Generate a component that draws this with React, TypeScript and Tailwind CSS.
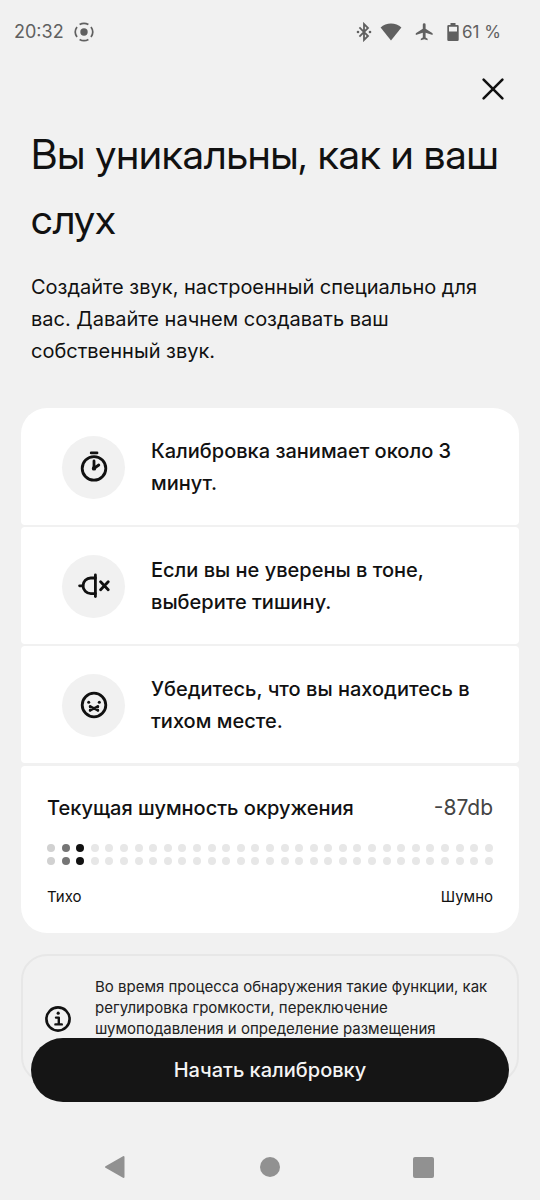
import type { ReactNode } from "react";

function TimerIcon() {
  return (
    <svg width="32" height="32" viewBox="0 0 32 32" fill="none" stroke="#111" strokeWidth="2.8" strokeLinecap="round" strokeLinejoin="round" aria-hidden="true">
      <circle cx="16" cy="17.4" r="11.8" />
      <path d="M13.2 1.900h5.800" />
      <path d="M16 10v7.400l4.800-3.400" />
      <circle cx="16" cy="17.4" r="1.4" fill="#111" strokeWidth="1.6" />
    </svg>
  );
}

function MutedToneIcon() {
  return (
    <svg width="32" height="32" viewBox="0 0 32 32" fill="none" stroke="#111" strokeWidth="2.8" strokeLinecap="round" aria-hidden="true">
      <path d="M17.4 5v21.6" />
      <path d="M17.4 8h-4.6a7.8 7.8 0 0 0 0 15.6h4.6" />
      <path d="M1.6 15.8H5" />
      <path d="M22.6 11.800l7.600 8M30.200 11.800l-7.600 8" />
    </svg>
  );
}

function QuietFaceIcon() {
  return (
    <svg width="32" height="32" viewBox="0 0 32 32" fill="none" stroke="#111" strokeWidth="2.8" strokeLinecap="round" aria-hidden="true">
      <circle cx="16" cy="16" r="11.8" />
      <circle cx="10.7" cy="13.2" r="1.5" fill="#111" stroke="none" />
      <circle cx="21.3" cy="13.2" r="1.5" fill="#111" stroke="none" />
      <path d="M12 17.4l8 4M20 17.4l-8 4" strokeWidth="2.4" />
      <path d="M12.2 17.6v.4M19.8 17.6v.4M12.2 21v.3M19.8 21v.3" strokeWidth="2.6" />
    </svg>
  );
}

function InfoIcon() {
  return (
    <svg className="shrink-0" width="28" height="28" viewBox="0 0 28 28" fill="none" stroke="#111" strokeWidth="2.6" strokeLinecap="round" aria-hidden="true">
      <circle cx="14" cy="14" r="11.6" />
      <path d="M12 12.6h2.8v6.6M11.4 19.4h6.400" strokeWidth="2.4" strokeLinejoin="round" />
      <circle cx="14.2" cy="8.2" r="1.6" fill="#111" stroke="none" />
    </svg>
  );
}

function StatusBar() {
  return (
    <div className="flex h-16 items-center justify-between pl-3.5 pr-[39px] text-[#606060]">
      <div className="flex items-center gap-2.5">
        <span className="text-lg leading-6">20:32</span>
        <svg width="20" height="20" viewBox="0 0 20 20" fill="none" stroke="currentColor" strokeWidth="1.7" aria-hidden="true">
          <circle cx="10" cy="10" r="3.7" fill="currentColor" stroke="none" />
          <path d="M5.6 2.6a8.6 8.6 0 0 1 8.8 0M5.6 17.4a8.6 8.6 0 0 0 8.8 0M3 5a8.6 8.6 0 0 0 0 10M17 5a8.6 8.6 0 0 1 0 10" />
        </svg>
      </div>
      <div className="flex items-center">
        <svg width="16" height="20" viewBox="0 0 16 20" fill="none" stroke="currentColor" strokeWidth="1.8" aria-hidden="true">
          <path d="M3.4 5.400l8.600 8.600-4 4V2l4 4-8.600 8.600" />
          <circle cx="2" cy="10" r="1.3" fill="currentColor" stroke="none" />
          <circle cx="14" cy="10" r="1.3" fill="currentColor" stroke="none" />
        </svg>
        <svg className="ml-2" width="22" height="20" viewBox="0 0 22 20" fill="currentColor" aria-hidden="true">
          <path d="M11 18.600L.6 5.600C3.400 3 7 1.600 11 1.600s7.600 1.400 10.400 4z" />
        </svg>
        <svg className="ml-3" width="20" height="20" viewBox="0 0 20 20" fill="currentColor" aria-hidden="true">
          <path d="M18.600 13v-1.800l-7-4.400V2.600a1.400 1.400 0 0 0-2.800 0v4.200l-7 4.400V13l7-2.200v4.600l-2 1.400v1.400l3.400-.9 3.400.9v-1.400l-2-1.400v-4.600z" />
        </svg>
        <svg className="ml-3" width="14" height="20" viewBox="0 0 14 20" aria-hidden="true">
          <path d="M4.500 1h5v2h2a1.200 1.200 0 0 1 1.200 1.200v13.600a1.200 1.200 0 0 1-1.200 1.200h-9a1.200 1.200 0 0 1-1.200-1.200V4.200A1.200 1.200 0 0 1 2.500 3h2zM3 4.800v4.800h8V4.800z" fill="currentColor" fillRule="evenodd" />
        </svg>
        <span className="ml-0.5 text-[17px] leading-6">61 %</span>
      </div>
    </div>
  );
}

function Tip({ icon, first, children }: { icon: ReactNode; first?: boolean; children: ReactNode }) {
  return (
    <li className={`flex items-center gap-[26px] bg-white pb-[26px] pt-[27px] pl-[41px] pr-6 ${first ? "rounded-t-[26px] rounded-b" : "rounded"}`}>
      <span className="flex size-[63px] shrink-0 items-center justify-center rounded-full bg-[#f1f1f1]">{icon}</span>
      <span className="text-xl font-medium leading-8">{children}</span>
    </li>
  );
}

const COLUMNS = 31;
const ACTIVE_COLORS = ["bg-[#d1d1d1]", "bg-[#757575]", "bg-[#111111]"];

function NoiseMeter() {
  return (
    <section className="rounded-b-[26px] rounded-t bg-white px-[26px] pb-6 pt-[26px]">
      <div className="flex items-center justify-between leading-8">
        <h2 className="text-xl font-medium leading-8">Текущая шумность окружения</h2>
        <span className="text-[21px] leading-8 text-[#444]">-87db</span>
      </div>
      <div className="mt-5 flex justify-between">
        {Array.from({ length: COLUMNS }, (_, i) => (
          <div key={i} className="flex flex-col gap-[5px]">
            <span className={`size-2 rounded-full ${ACTIVE_COLORS[i] ?? "bg-[#e7e7e7]"}`} />
            <span className={`size-2 rounded-full ${ACTIVE_COLORS[i] ?? "bg-[#e7e7e7]"}`} />
          </div>
        ))}
      </div>
      <div className="mt-5 flex justify-between text-[15px] leading-6">
        <span>Тихо</span>
        <span>Шумно</span>
      </div>
    </section>
  );
}

export default function App() {
  return (
    <div className="flex min-h-screen flex-col bg-[#f1f1f1] font-['Inter','Noto_Sans',sans-serif] text-[#111]">
      <StatusBar />
      <main className="px-[21px]">
        <div className="flex justify-end pr-2.5">
          <button type="button" aria-label="Закрыть" className="flex h-[50px] w-8 items-center justify-center">
            <svg width="24" height="24" viewBox="0 0 24 24" fill="none" stroke="#111" strokeWidth="2.6" strokeLinecap="round" aria-hidden="true">
              <path d="M2.600 2.600l18.800 18.800M21.400 2.600L2.600 21.400" />
            </svg>
          </button>
        </div>
        <div className="px-2.5 pt-2">
          <h1 className="font-['Inter_Display','Inter',sans-serif] text-[41px] leading-[65px]">Вы уникальны, как и ваш слух</h1>
          <p className="mt-[19px] text-xl leading-8">
            Создайте звук, настроенный специально для вас. Давайте начнем создавать ваш собственный звук.
          </p>
        </div>
        <div className="mt-[41px] flex flex-col gap-[3px]">
          <ul className="flex flex-col gap-[2px]">
            <Tip first icon={<TimerIcon />}>Калибровка занимает около 3 минут.</Tip>
            <Tip icon={<MutedToneIcon />}>Если вы не уверены в тоне, выберите тишину.</Tip>
            <Tip icon={<QuietFaceIcon />}>Убедитесь, что вы находитесь в тихом месте.</Tip>
          </ul>
          <NoiseMeter />
        </div>
        <aside className="mt-[21px] flex items-center gap-[23px] rounded-[26px] border-2 border-[#e7e7e7] pl-[21px] pr-4">
          <InfoIcon />
          <p className="pb-[42px] pt-5 text-[15px] leading-[21px] text-[#222]">
            Во время процесса обнаружения такие функции, как регулировка громкости, переключение шумоподавления и определение размещения
          </p>
        </aside>
      </main>
      <footer className="sticky bottom-0 z-10 -mt-[45px]">
        <div className="px-[31px]">
          <button type="button" className="h-16 w-full rounded-full bg-[#151515] text-xl font-medium text-[#f4f4f4]">
            Начать калибровку
          </button>
        </div>
        <nav className="flex h-[98px] items-center justify-between pl-[103px] pr-[106px] pt-8">
          <button type="button" aria-label="Назад">
            <svg width="24" height="24" viewBox="0 0 24 24" fill="#919191" stroke="#919191" strokeWidth="2" strokeLinejoin="round" aria-hidden="true">
              <path d="M3 12L20.500 2v20z" />
            </svg>
          </button>
          <button type="button" aria-label="Главный экран">
            <span className="block size-5 rounded-full bg-[#919191]" />
          </button>
          <button type="button" aria-label="Недавние">
            <span className="block size-[21px] rounded-xs bg-[#919191]" />
          </button>
        </nav>
      </footer>
    </div>
  );
}
